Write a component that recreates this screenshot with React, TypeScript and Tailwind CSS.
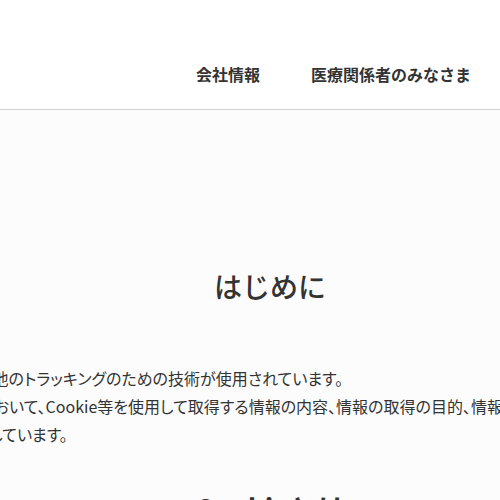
import React from 'react';

const navItems = ['会社情報', '医療関係者のみなさま'];

export default function App() {
  return (
    <div
      className="w-[500px] h-[500px] overflow-hidden bg-white text-[#333]"
      style={{ fontFamily: '"Noto Sans CJK JP", "Noto Sans", sans-serif' }}
    >
      {/* Header */}
      <header className="h-[110px] border-b border-[#cfcfcf] bg-white flex justify-end items-start pt-[62px] pr-[29px]">
        <nav className="flex gap-[51px]">
          {navItems.map((item) => (
            <a key={item} className="text-[16px] leading-6 font-bold text-[#333] whitespace-nowrap">
              {item}
            </a>
          ))}
        </nav>
      </header>

      {/* Main */}
      <main className="bg-[#fcfcfc] h-[390px] flex justify-center pl-[40px] pt-[156px]">
        <div className="w-[1000px] shrink-0">
          <h1 className="text-center text-[28px] leading-[40px] font-medium">はじめに</h1>

          <div className="mt-[58px] text-[16px] leading-[28px] whitespace-nowrap [font-feature-settings:'palt']">
            <p>当サイトでは、Cookieおよびその他のトラッキングのための技術が使用されています。</p>
            <p>
              本Cookieポリシーは、当サイトにおいて、Cookie等を使用して取得する情報の内容、情報の取得の目的、情報の利用方法および
              <br />
              第三者提供の有無について説明しています。
            </p>
          </div>

          <h2 className="mt-[40px] text-center text-[28px] leading-[40px] font-bold">Cookieとは</h2>
        </div>
      </main>
    </div>
  );
}
